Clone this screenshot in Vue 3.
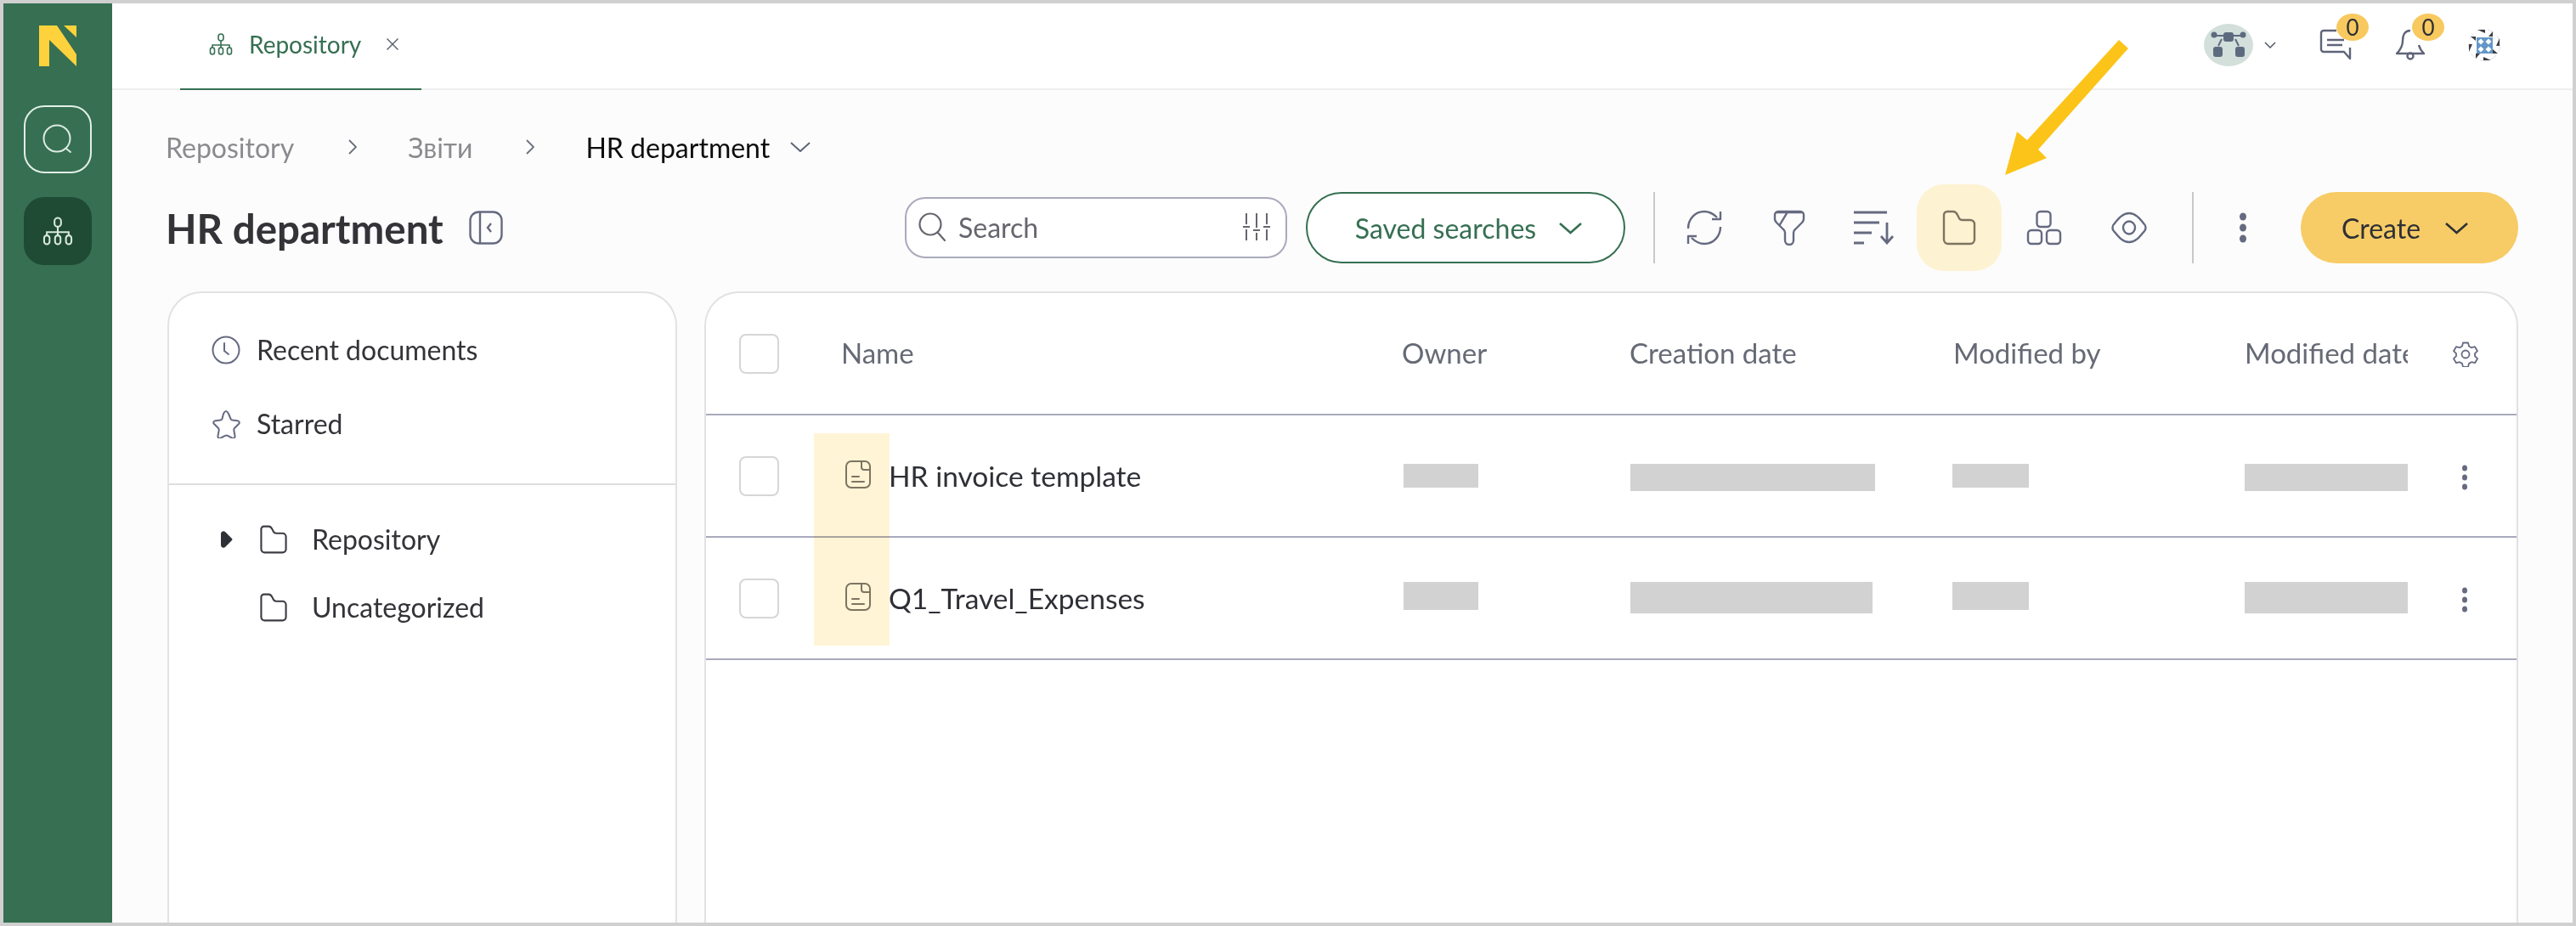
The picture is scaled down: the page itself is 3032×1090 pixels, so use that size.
<script setup>
const rows = [
  { name: 'HR invoice template', w: [88, 288, 90, 192], h: 28, tall: 32, top: 57 },
  { name: 'Q1_Travel_Expenses', w: [88, 285, 90, 192], h: 33, tall: 37, top: 52 }
]
const nudges = [2, 1, -1, 0]
const quiltTurns = [0, 90, 180, 270]
</script>

<template>
  <div class="frame">
    <aside class="rail">
      <svg class="logo" width="44" height="48" viewBox="0 0 44 48"><path fill="#fdd23c" d="M0 0H21L44 34V48L12 17V48H0Z"/><path fill="#fdd23c" d="M29 0H44V14Z"/></svg>
      <div class="rail-btn outlined">
        <svg width="36" height="36" viewBox="0 0 36 36" fill="none" stroke="#dcebe0" stroke-width="2"><circle cx="17" cy="17" r="15.500"/><path d="M28 29l5 4" stroke-linecap="round"/></svg>
      </div>
      <div class="rail-btn active">
        <svg width="36" height="36" viewBox="0 0 28 26" fill="none" stroke="#d8e8dc" stroke-width="1.600"><rect x="11" y="1" width="6" height="8" rx="3"/><path d="M14 9v8M4 17v-3h20v3"/><rect x="1.500" y="17" width="5" height="8" rx="2.500"/><rect x="11.500" y="17" width="5" height="8" rx="2.500"/><rect x="21.500" y="17" width="5" height="8" rx="2.500"/></svg>
      </div>
    </aside>

    <main class="main">
      <header class="topbar">
        <div class="tab">
          <svg width="28" height="26" viewBox="0 0 28 26" fill="none" stroke="#366f52" stroke-width="1.600"><rect x="11" y="1" width="6" height="8" rx="3"/><path d="M14 9v8M4 17v-3h20v3"/><rect x="1.500" y="17" width="5" height="8" rx="2.500"/><rect x="11.500" y="17" width="5" height="8" rx="2.500"/><rect x="21.500" y="17" width="5" height="8" rx="2.500"/></svg>
          <span class="tab-label">Repository</span>
          <svg class="tab-x" width="16" height="16" viewBox="0 0 16 16" stroke="#555a66" stroke-width="1.400"><path d="M1.500 1.500l13 13M14.500 1.500l-13 13"/></svg>
        </div>
        <div class="top-right">
          <div class="avatar">
            <svg width="42" height="36" viewBox="0 0 42 36" fill="#5d6a7e" stroke="none"><rect x="15" y="3" width="12" height="11" rx="3"/><rect x="3" y="20" width="11" height="12" rx="3"/><rect x="29" y="20" width="11" height="12" rx="3"/><circle cx="4" cy="6" r="3.500"/><circle cx="38" cy="6" r="3.500"/><path d="M7 7h8M27 7h8M13 11l-4 8M29 11l4 8" stroke="#5d6a7e" stroke-width="2" fill="none"/></svg>
          </div>
          <svg class="avatar-chev" width="14" height="8" viewBox="0 0 14 8" fill="none" stroke="#555a66" stroke-width="1.500"><path d="M1 1l6 6 6-6"/></svg>
          <div class="notify chat">
            <svg width="38" height="38" viewBox="0 0 38 38" fill="none" stroke="#5f6478" stroke-width="2.400" stroke-linejoin="round"><path d="M20 2H5a3 3 0 0 0-3 3v19a3 3 0 0 0 3 3h24l7 8V22"/><path d="M9 13h20M9 19h18"/></svg>
            <span class="badge">0</span>
          </div>
          <div class="notify bell">
            <svg width="36" height="38" viewBox="0 0 36 38" fill="none" stroke="#5f6478" stroke-width="2.400" stroke-linejoin="round"><path d="M18 2C11 2 9 8 9 14c0 7-3 11-7 15h32c-3-3-5-6-6-10"/><circle cx="18" cy="32" r="3.500"/></svg>
            <span class="badge">0</span>
          </div>
          <svg class="quilt" width="38" height="38" viewBox="0 0 38 38">
            <circle cx="19" cy="19" r="18.500" fill="#fff" stroke="#e2e2e6" stroke-width="1" stroke-dasharray="8 5"/>
            <rect x="10" y="10" width="19" height="19" fill="#6497c9"/>
            <g fill="#fff"><path d="M15 11.500l3.500 3.500-3.500 3.500-3.500-3.500zM24 11.500l3.500 3.500-3.500 3.500-3.500-3.500zM15 20.500l3.500 3.500-3.500 3.500-3.500-3.500zM24 20.500l3.500 3.500-3.500 3.500-3.500-3.500z"/></g>
            <g v-for="t in quiltTurns" :key="t" :transform="`rotate(${t} 19 19)`" fill="#3c3f44"><path d="M11 1l9 0 0 4zM29 3v6h-5z"/></g>
          </svg>
        </div>
      </header>

      <div class="page">
        <nav class="crumbs">
          <span class="crumb muted">Repository</span>
          <svg class="sep first" width="10" height="18" viewBox="0 0 10 18" fill="none" stroke="#6b6f7c" stroke-width="1.800"><path d="M1 1l8 8-8 8"/></svg>
          <span class="crumb muted second">Звіти</span>
          <svg class="sep second-sep" width="10" height="18" viewBox="0 0 10 18" fill="none" stroke="#6b6f7c" stroke-width="1.800"><path d="M1 1l8 8-8 8"/></svg>
          <span class="crumb current">HR department</span>
          <svg class="crumb-chev" width="24" height="12" viewBox="0 0 24 12" fill="none" stroke="#5f6478" stroke-width="2"><path d="M1 1l11 10L23 1"/></svg>
        </nav>

        <div class="toolbar">
          <h1 class="title">HR department</h1>
          <svg class="collapse" width="40" height="40" viewBox="0 0 40 40" fill="none" stroke="#656a80" stroke-width="2.400"><rect x="1.500" y="1.500" width="37" height="37" rx="10"/><path d="M13 2v36M26 15l-4 5 4 5"/></svg>

          <div class="search">
            <svg width="34" height="34" viewBox="0 0 34 34" fill="none" stroke="#66666e" stroke-width="2.200"><circle cx="14" cy="14" r="12.500"/><path d="M23 24l8 9" stroke-linecap="round"/></svg>
            <span class="search-text">Search</span>
            <svg class="sliders" width="32" height="34" viewBox="0 0 32 34" fill="none" stroke="#66666e" stroke-width="2"><path d="M4 1v13M4 20v13M16 1v17M16 24v9M28 1v13M28 20v13M0 17h8M12 21h8M24 17h8"/></svg>
          </div>
          <button class="saved">Saved searches
            <svg width="29" height="15" viewBox="0 0 29 15" fill="none" stroke="#366f52" stroke-width="2.600"><path d="M2 2l12.500 11L27 2"/></svg>
          </button>
          <span class="vline first-line"></span>
          <div class="tools">
            <span class="tool">
              <svg width="42" height="42" viewBox="0 0 42 42" fill="none" stroke="#656a80" stroke-width="2.400" stroke-linejoin="round"><path d="M2 22C2 11 10 2 21 2c6 0 11 3 15 7"/><path d="M40 2v9H30"/><path d="M40 20c0 11-8 20-19 20-6 0-11-3-15-7"/><path d="M2 40v-9h10"/></svg>
            </span>
            <span class="tool">
              <svg width="38" height="42" viewBox="0 0 38 42" fill="none" stroke="#656a80" stroke-width="2.400" stroke-linejoin="round"><path d="M6 2h26a4 4 0 0 1 4 4v5a7 7 0 0 1-2 4l-8 8a5 5 0 0 0-2 4v9a5 5 0 0 1-10 0v-9a5 5 0 0 0-2-4l-8-8a7 7 0 0 1-2-4V6a4 4 0 0 1 4-4Z"/><path d="M7 19L17 2.500M4 3h30"/></svg>
            </span>
            <span class="tool">
              <svg width="48" height="40" viewBox="0 0 48 40" fill="none" stroke="#656a80" stroke-width="2.800"><path d="M0 2h39M0 14h30M0 26h21M0 38h12"/><path d="M39 14v24M32 30l7 8 7-8"/></svg>
            </span>
            <span class="tool picked">
              <svg width="40" height="42" viewBox="0 0 40 42" fill="none" stroke="#7d7461" stroke-width="2.400" stroke-linejoin="round"><path d="M2 6a4 4 0 0 1 4-4h7c3 0 4 2 5 4l2 4c1 2 2 2 4 2h9a5 5 0 0 1 5 5v18a5 5 0 0 1-5 5H7a5 5 0 0 1-5-5Z"/></svg>
            </span>
            <span class="tool">
              <svg width="42" height="42" viewBox="0 0 42 42" fill="none" stroke="#656a80" stroke-width="2.400"><rect x="12.500" y="2" width="16" height="18" rx="4"/><rect x="2" y="24" width="16" height="16" rx="4"/><rect x="24" y="24" width="16" height="16" rx="4"/></svg>
            </span>
            <span class="tool">
              <svg width="42" height="38" viewBox="0 0 42 38" fill="none" stroke="#656a80" stroke-width="2.400"><path d="M21 2C29 2 34 9 39 15c2 2 2 6 0 8C34 29 29 36 21 36S8 29 3 23c-2-2-2-6 0-8C8 9 13 2 21 2Z"/><ellipse cx="21" cy="19" rx="7" ry="7.500"/></svg>
            </span>
          </div>
          <span class="vline second-line"></span>
          <svg class="more" width="10" height="36" viewBox="0 0 10 36" fill="#656a80"><ellipse cx="5" cy="5" rx="4" ry="4.500"/><ellipse cx="5" cy="18" rx="4" ry="4.500"/><ellipse cx="5" cy="31" rx="4" ry="4.500"/></svg>
          <button class="create">Create
            <svg width="29" height="15" viewBox="0 0 29 15" fill="none" stroke="#2f3036" stroke-width="2.600"><path d="M2 2l12.500 11L27 2"/></svg>
          </button>
        </div>

        <div class="panels">
          <section class="side">
            <div class="quick">
              <div class="quick-item">
                <svg width="34" height="34" viewBox="0 0 34 34" fill="none" stroke="#656a80" stroke-width="2"><circle cx="17" cy="17" r="15.500"/><path d="M15 9v9l5 4" stroke-linecap="round" stroke-linejoin="round"/></svg>
                <span>Recent documents</span>
              </div>
              <div class="quick-item">
                <svg width="34" height="34" viewBox="0 0 34 34" fill="none" stroke="#656a80" stroke-width="2" stroke-linejoin="round"><path d="M17 2c1 0 2 1 3 3l2.500 6c.5 1 1 1.500 2 1.500l6 .8c2 .3 3 2 1.500 3.700l-5 5c-.7.700-.8 1.500-.7 2.500l1.200 6.500c.4 2.500-1.300 3.500-3.500 2.500l-5-2.700c-1-.5-2-.5-3 0l-5 2.700c-2.200 1-3.900 0-3.500-2.500l1.200-6.500c.1-1 0-1.800-.7-2.500l-5-5c-1.500-1.700-.5-3.400 1.500-3.700l6-.8c1 0 1.500-.5 2-1.500L14 5c1-2 2-3 3-3Z"/></svg>
                <span>Starred</span>
              </div>
            </div>
            <div class="tree">
              <div class="tree-item">
                <svg class="caret" width="15" height="20" viewBox="0 0 15 20" fill="#2f3036"><path d="M1 3a3 3 0 0 1 5-2l8 8a1.500 1.500 0 0 1 0 2l-8 8a3 3 0 0 1-5-2Z"/></svg>
                <svg width="34" height="34" viewBox="0 0 40 42" fill="none" stroke="#3b3c44" stroke-width="2.600" stroke-linejoin="round"><path d="M2 6a4 4 0 0 1 4-4h7c3 0 4 2 5 4l2 4c1 2 2 2 4 2h9a5 5 0 0 1 5 5v18a5 5 0 0 1-5 5H7a5 5 0 0 1-5-5Z"/></svg>
                <span>Repository</span>
              </div>
              <div class="tree-item nested">
                <svg width="34" height="34" viewBox="0 0 40 42" fill="none" stroke="#3b3c44" stroke-width="2.600" stroke-linejoin="round"><path d="M2 6a4 4 0 0 1 4-4h7c3 0 4 2 5 4l2 4c1 2 2 2 4 2h9a5 5 0 0 1 5 5v18a5 5 0 0 1-5 5H7a5 5 0 0 1-5-5Z"/></svg>
                <span>Uncategorized</span>
              </div>
            </div>
          </section>

          <section class="table">
            <div class="grid head">
              <span class="check"></span>
              <span class="th name-col name-head">Name</span>
              <span class="th">Owner</span>
              <span class="th">Creation date</span>
              <span class="th">Modified by</span>
              <span class="th clip">Modified date</span>
              <svg class="gear" width="32" height="30" viewBox="0 0 32 30" fill="none" stroke="#656a80" stroke-width="1.800" stroke-linejoin="round"><path d="M13 1.500h6l1 4 3 1.700 4-1 3 5-3 3v3l3 3-3 5-4-1-3 1.700-1 4h-6l-1-4-3-1.700-4 1-3-5 3-3v-3l-3-3 3-5 4 1 3-1.700Z"/><circle cx="16" cy="15" r="4.500"/></svg>
            </div>
            <div v-for="r in rows" :key="r.name" class="grid row">
              <span class="check"></span>
              <span class="name-col file">
                <svg class="doc" width="30" height="33" viewBox="0 0 30 33" fill="none" stroke="#7d7461" stroke-width="2" stroke-linejoin="round"><rect x="1" y="1" width="28" height="31" rx="6"/><path d="M19 2v6a3 3 0 0 0 3 3h6" stroke-linecap="round"/><path d="M8 19h8M8 25h14" stroke-linecap="round"/></svg>
                <span class="file-name">{{ r.name }}</span>
              </span>
              <span
                v-for="(width, i) in r.w"
                :key="i"
                class="redact"
                :style="{ width: width + 'px', height: (i % 2 ? r.tall : r.h) + 'px', marginTop: r.top + 'px', marginLeft: nudges[i] + 'px' }"
              ></span>
              <svg class="row-more" width="8" height="30" viewBox="0 0 8 30" fill="#656a80"><ellipse cx="4" cy="4" rx="3" ry="3.500"/><ellipse cx="4" cy="15" rx="3" ry="3.500"/><ellipse cx="4" cy="26" rx="3" ry="3.500"/></svg>
            </div>
          </section>
        </div>
      </div>
    </main>

    <div class="mark"></div>
    <svg class="arrow" width="160" height="170" viewBox="2355 42 160 170"><path fill="#fcc419" d="M2494 47 2505 57 2399 176 2409 186 2360 206 2374 155 2386 165Z"/></svg>
  </div>
</template>

<style>
html, body { margin: 0; background: #d0d0d0; }
</style>

<style scoped>
.frame {
  position: relative;
  box-sizing: border-box;
  width: 3032px;
  height: 1090px;
  border: 4px solid #d0d0d0;
  display: flex;
  overflow: hidden;
  font-family: Lato, "Noto Sans", sans-serif;
  color: #2f3036;
}
.rail {
  width: 128px;
  flex: none;
  background: #366f52;
  display: flex;
  flex-direction: column;
  align-items: center;
}
.logo { margin: 26px 0 46px; }
.rail-btn {
  box-sizing: border-box;
  width: 80px;
  height: 80px;
  border-radius: 24px;
  display: flex;
  align-items: center;
  justify-content: center;
  margin-bottom: 28px;
}
.outlined { border: 2px solid #e3efe6; }
.active { background: #1f4a33; }

.main { flex: 1; min-width: 0; display: flex; flex-direction: column; background: #fcfcfc; }
.topbar {
  box-sizing: border-box;
  height: 102px;
  flex: none;
  background: #fff;
  border-bottom: 2px solid #eeeeee;
  display: flex;
  align-items: stretch;
}
.tab {
  box-sizing: border-box;
  width: 284px;
  height: 102px;
  margin-left: 80px;
  padding: 0 0 4px 34px;
  border-bottom: 2px solid #366f52;
  display: flex;
  align-items: center;
}
.tab-label { margin-left: 19px; font-size: 28px; color: #366f52; }
.tab-x { margin-left: 29px; }
.top-right { margin-left: auto; display: flex; align-items: center; padding-right: 85px; padding-bottom: 2px; }
.avatar {
  width: 58px; height: 50px; border-radius: 50%;
  background: #d3dfda; display: flex; align-items: center; justify-content: center;
}
.avatar-chev { margin-left: 13px; }
.notify { position: relative; display: flex; }
.chat { margin-left: 51px; }
.bell { margin-left: 51px; }
.badge {
  position: absolute;
  top: -18px;
  left: 20px;
  width: 38px;
  height: 32px;
  border-radius: 50%;
  background: #f7c95f;
  font-size: 26px;
  line-height: 32px;
  text-align: center;
  color: #2f3036;
}
.quilt { margin-left: 50px; }

.page { flex: 1; min-height: 0; padding: 38px 64px 0 65px; display: flex; flex-direction: column; }
.crumbs { height: 58px; display: flex; align-items: center; font-size: 32px; margin: 0 0 15px -2px; }
.crumb.muted { color: #8b8b8f; }
.sep.first { margin-left: 64px; }
.crumb.second { margin-left: 60px; }
.second-sep { margin-left: 63px; }
.current { margin-left: 60px; color: #0d0d0d; }
.crumb-chev { margin-left: 24px; }

.toolbar { height: 102px; display: flex; align-items: center; }
.title { margin: 0 0 0 -2px; font-size: 47.500px; font-weight: 700; color: #333338; }
.collapse { margin-left: 30px; }
.search {
  box-sizing: border-box;
  width: 450px;
  height: 72px;
  margin-left: auto;
  padding: 0 18px 2px 14px;
  border: 2px solid #a9a9bd;
  border-radius: 24px;
  background: #fff;
  display: flex;
  align-items: center;
  color: #66666e;
}
.search-text { margin-left: 13px; font-size: 32px; }
.sliders { margin-left: auto; }
.saved {
  box-sizing: border-box;
  width: 376px;
  height: 84px;
  margin-left: 22px;
  padding: 0 0 0 8px;
  border: 2px solid #366f52;
  border-radius: 42px;
  background: #fff;
  display: flex;
  align-items: center;
  justify-content: center;
  gap: 26px;
  font: 32px Lato, sans-serif;
  color: #366f52;
}
.vline { width: 2px; height: 84px; background: #c8c8cc; flex: none; }
.first-line { margin-left: 33px; }
.second-line { margin-left: 24px; }
.tools { display: flex; margin-left: 8px; }
.tool { width: 100px; height: 102px; display: flex; align-items: center; justify-content: center; }
.picked { background: #fdf2d2; border-radius: 32px; }
.more { margin-left: 53px; }
.create {
  box-sizing: border-box;
  width: 256px;
  height: 84px;
  margin-left: 63px;
  padding: 0 10px 0 0;
  border: 0;
  border-radius: 42px;
  background: #f7cc66;
  display: flex;
  align-items: center;
  justify-content: center;
  gap: 28px;
  font: 32px Lato, sans-serif;
  color: #2f3036;
}

.panels { flex: 1; min-height: 0; margin-top: 24px; display: flex; gap: 32px; margin-bottom: -4px; }
.side, .table {
  box-sizing: border-box;
  background: #fff;
  border: 2px solid #e2e2e4;
  border-bottom: 0;
  border-radius: 40px 40px 0 0;
}
.side { width: 600px; flex: none; font-size: 32px; color: #333338; }
.quick { padding: 23px 0 27px; border-bottom: 2px solid #dedee0; }
.quick-item { height: 87px; display: flex; align-items: center; padding-left: 50px; gap: 19px; }
.tree { padding-top: 24px; }
.tree-item { height: 80px; display: flex; align-items: center; padding-left: 60px; }
.tree-item span { margin: -2px 0 0 28px; }
.caret { margin-right: 31px; }
.nested { padding-left: 106px; }

.table { flex: 1; min-width: 0; }
.grid {
  box-sizing: border-box;
  display: grid;
  grid-template-columns: 39px 47px 75px 658px 268px 381px 343px 244px 1fr;
  align-items: center;
  border-bottom: 2px solid #a9a9bd;
}
.head { height: 144px; }
.row { height: 144px; }
.check {
  grid-column: 2;
  box-sizing: border-box;
  width: 47px;
  height: 47px;
  border: 2px solid #d6d6d8;
  border-radius: 8px;
  background: #fff;
}
.name-col { grid-column: 4; }
.th { font-size: 33px; color: #666a75; white-space: nowrap; margin-top: -2px; }
.name-head { margin-left: -2px; }
.clip { width: 192px; overflow: hidden; }
.gear { justify-self: start; margin-top: 2px; }
.file { display: flex; align-items: center; font-size: 33.500px; color: #2f3036; }
.doc { flex: none; margin: -3px 21px 0 3px; position: relative; z-index: 2; }
.file-name { position: relative; z-index: 2; }
.redact { background: #d2d2d2; display: block; align-self: start; }
.row-more { margin-left: 11px; margin-top: 4px; }

.mark {
  position: absolute;
  left: 954px;
  top: 506px;
  width: 89px;
  height: 250px;
  background: #fff3d2;
  opacity: 0.9;
  mix-blend-mode: multiply;
}
.arrow { position: absolute; left: 2351px; top: 38px; }
</style>
